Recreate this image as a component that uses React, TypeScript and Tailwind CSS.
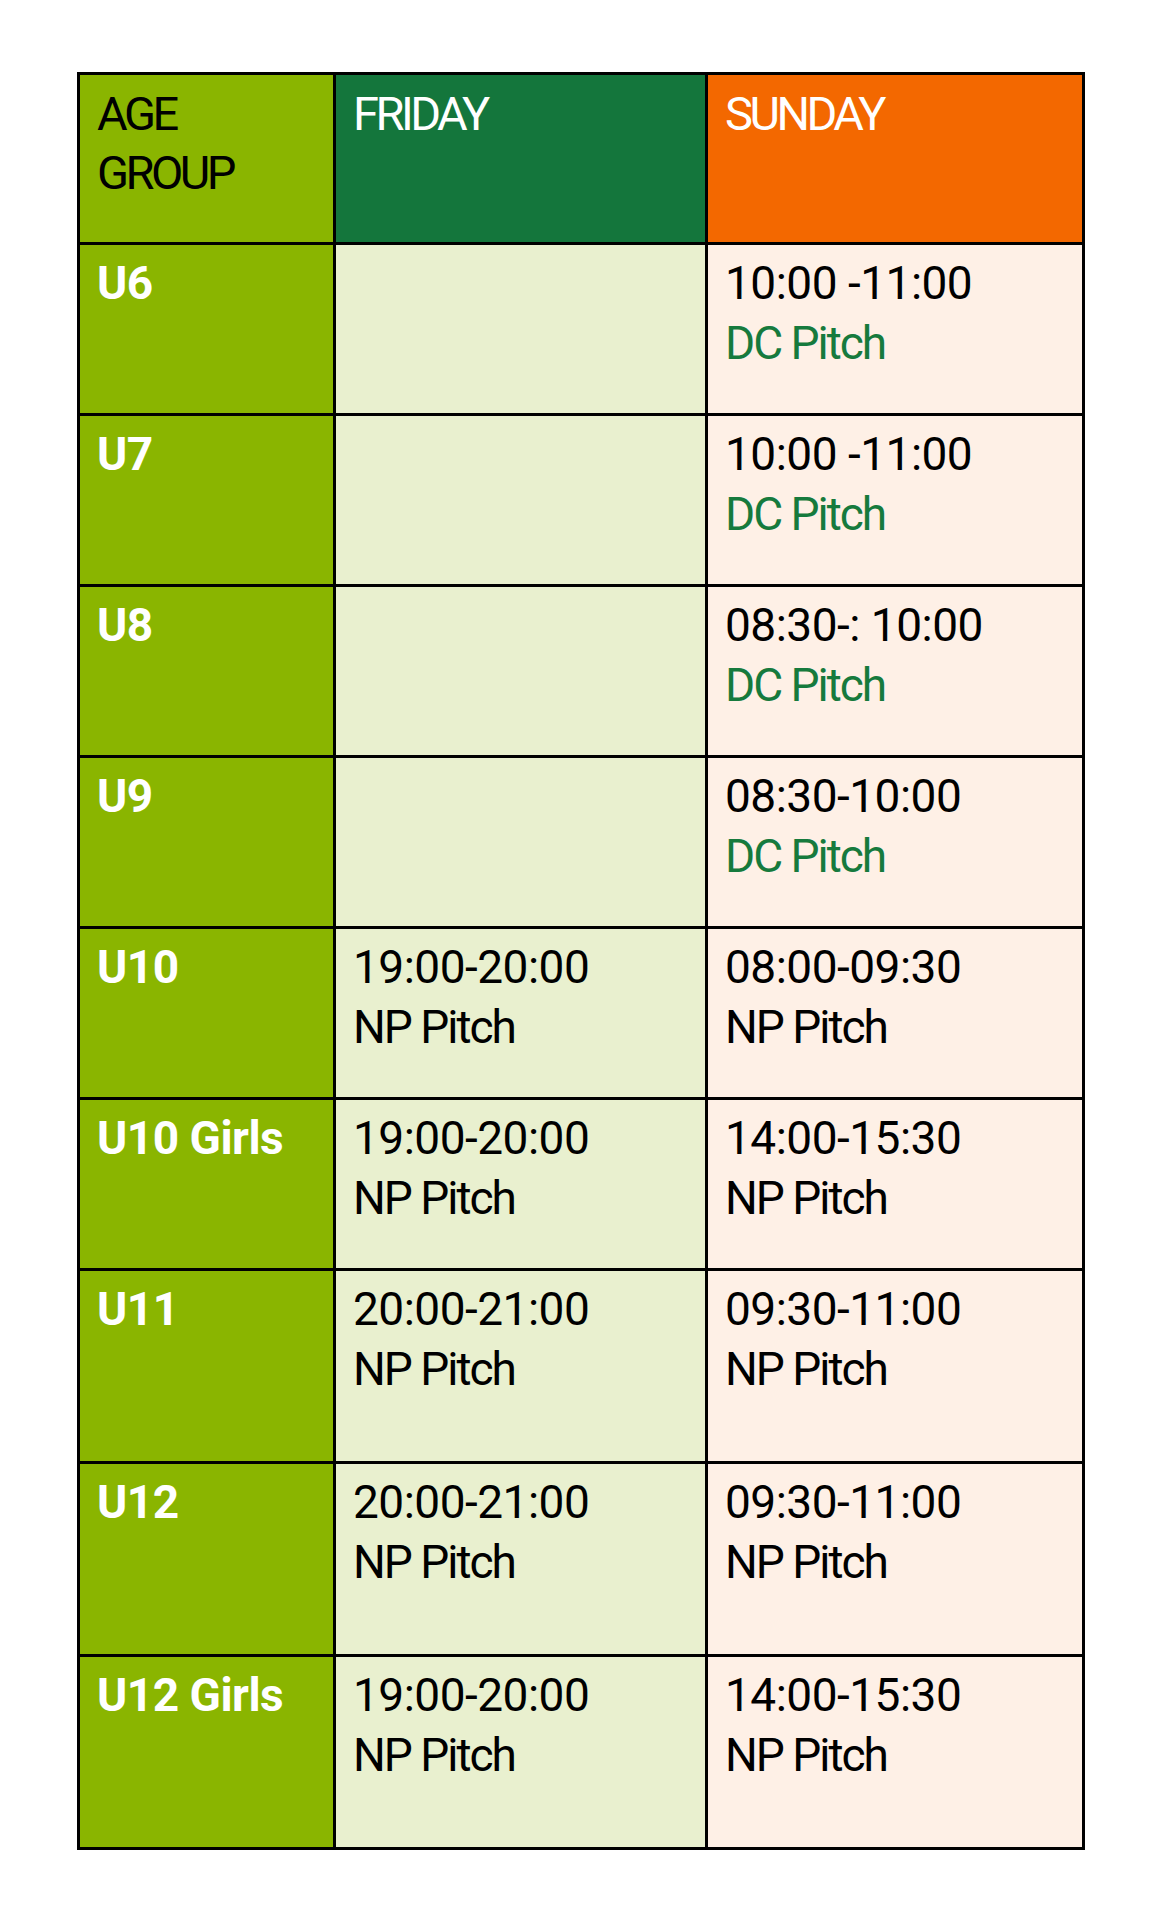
type Row = {
  age: string;
  friday?: [string, string];
  sunday: [string, string];
  dc?: boolean;
};

const rows: Row[] = [
  { age: 'U6', sunday: ['10:00 -11:00', 'DC Pitch'], dc: true },
  { age: 'U7', sunday: ['10:00 -11:00', 'DC Pitch'], dc: true },
  { age: 'U8', sunday: ['08:30-: 10:00', 'DC Pitch'], dc: true },
  { age: 'U9', sunday: ['08:30-10:00', 'DC Pitch'], dc: true },
  { age: 'U10', friday: ['19:00-20:00', 'NP Pitch'], sunday: ['08:00-09:30', 'NP Pitch'] },
  { age: 'U10 Girls', friday: ['19:00-20:00', 'NP Pitch'], sunday: ['14:00-15:30', 'NP Pitch'] },
  { age: 'U11', friday: ['20:00-21:00', 'NP Pitch'], sunday: ['09:30-11:00', 'NP Pitch'] },
  { age: 'U12', friday: ['20:00-21:00', 'NP Pitch'], sunday: ['09:30-11:00', 'NP Pitch'] },
  { age: 'U12 Girls', friday: ['19:00-20:00', 'NP Pitch'], sunday: ['14:00-15:30', 'NP Pitch'] },
];

const cell = 'px-[17px] pt-[8px] text-[46px] leading-[60px]';
const head = 'px-[17px] pt-[9px] text-[47px] leading-[59px] tracking-[-3.5px]';

const Slot = ({ time, place, green }: { time: string; place: string; green?: boolean }) => (
  <>
    <div className="tracking-[-0.5px]">{time}</div>
    <div className={green ? 'tracking-[-2px] text-[#167a3d]' : 'tracking-[-2px]'}>{place}</div>
  </>
);

export default function App() {
  return (
    <div className="min-h-[1930px] bg-white pl-[77px] pt-[72px] font-['Roboto',sans-serif]">
      <div className="grid w-[1008px] grid-cols-[253px_369px_374px] grid-rows-[167px_repeat(6,168px)_repeat(3,190px)] gap-[3px] border-[3px] border-black bg-black">
        <div className={`${head} bg-[#8ab500] text-black`}>
          AGE
          <br />
          GROUP
        </div>
        <div className={`${head} bg-[#14763c] text-white`}>FRIDAY</div>
        <div className={`${head} bg-[#f36800] text-white`}>SUNDAY</div>

        {rows.map((row) => (
          <div key={row.age} className="contents">
            <div className={`${cell} bg-[#8ab500] font-bold tracking-[-0.5px] text-white`}>{row.age}</div>
            <div className={`${cell} bg-[#e9f0cf] text-black`}>
              {row.friday && <Slot time={row.friday[0]} place={row.friday[1]} />}
            </div>
            <div className={`${cell} bg-[#fef0e6] text-black`}>
              <Slot time={row.sunday[0]} place={row.sunday[1]} green={row.dc} />
            </div>
          </div>
        ))}
      </div>
    </div>
  );
}
